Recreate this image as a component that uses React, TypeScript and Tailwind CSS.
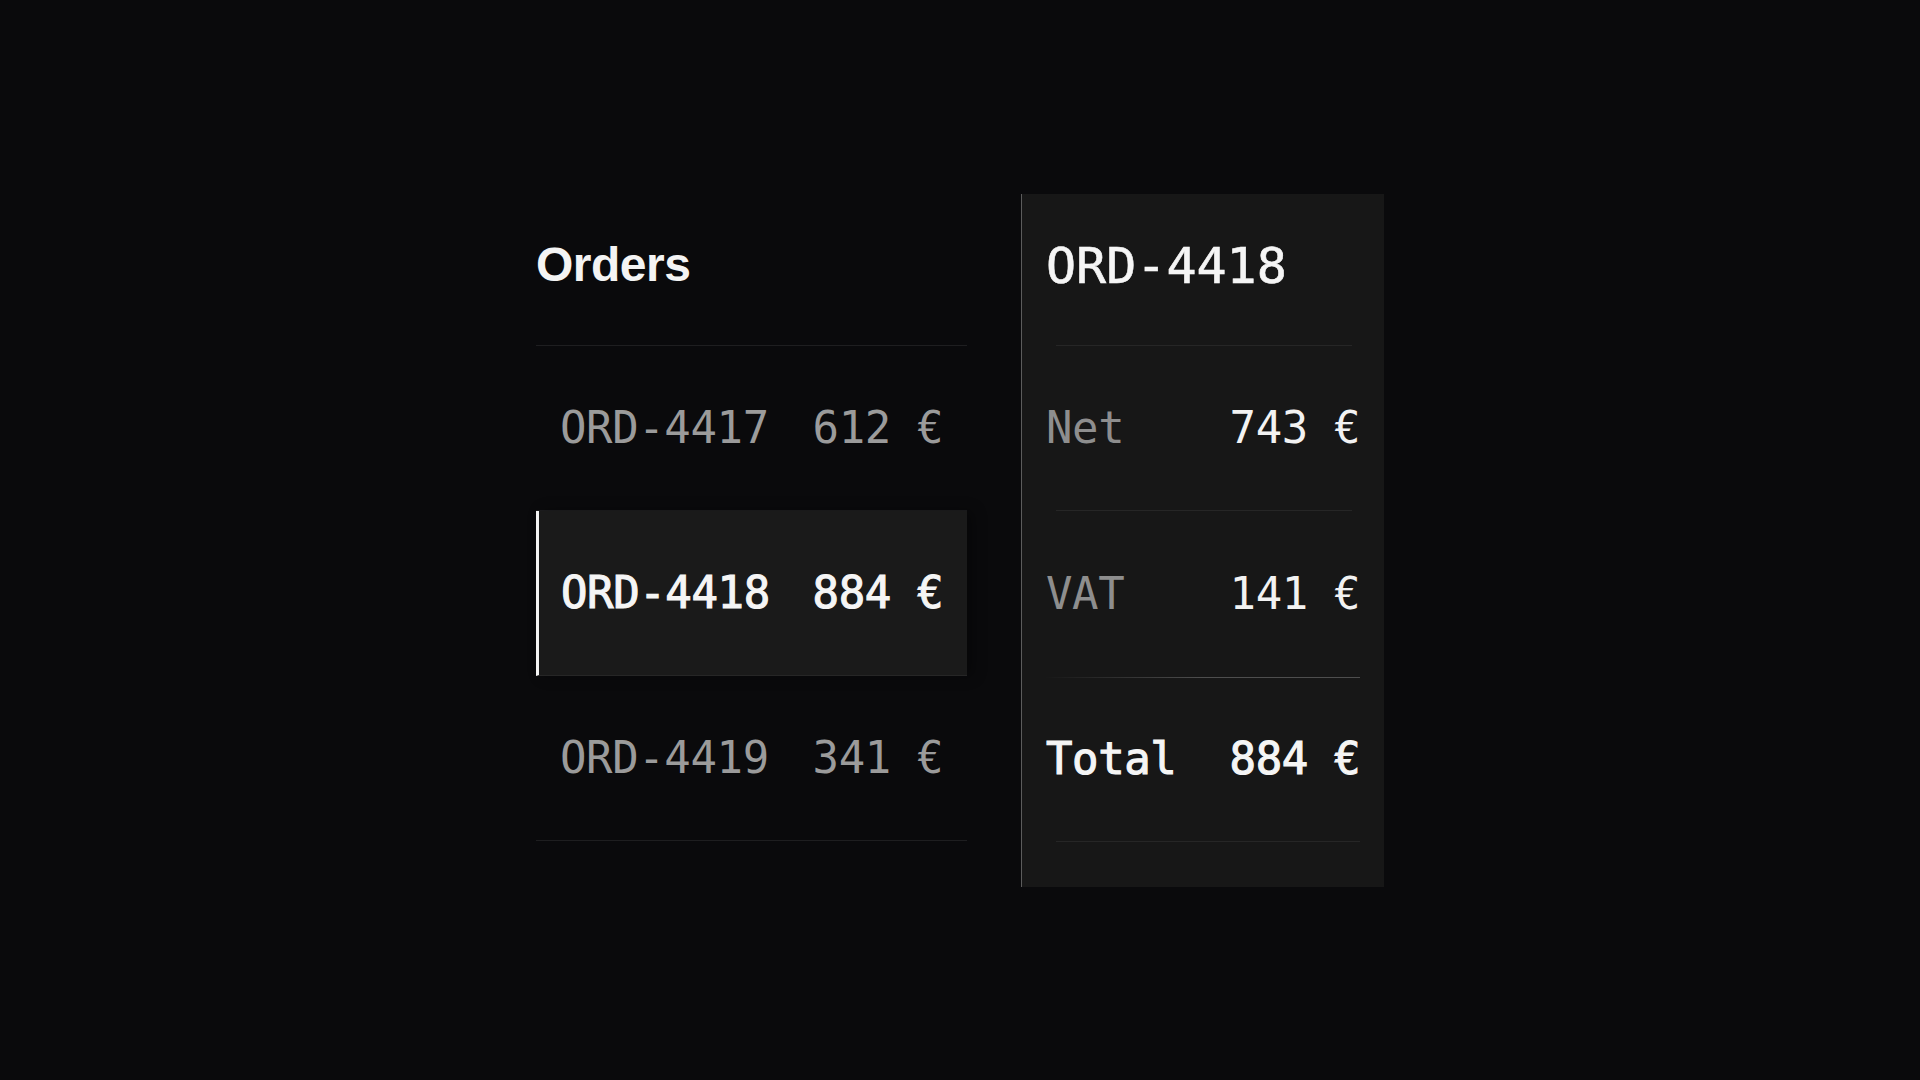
import React from "react";

const mono = { fontFamily: '"DejaVu Sans Mono", "Liberation Mono", monospace' };

const orders = [
  { id: "ORD-4417", amount: "612 €", selected: false },
  { id: "ORD-4418", amount: "884 €", selected: true },
  { id: "ORD-4419", amount: "341 €", selected: false },
];

export default function App() {
  return (
    <div className="min-h-screen w-full bg-[#0a0a0c] flex items-center justify-center">
      <div className="flex items-start gap-[54px]">
        {/* Left list */}
        <div className="w-[431px] flex flex-col">
          <div className="h-[152px] flex items-center border-b border-[#1e1e20]">
            <h1
              className="text-[48px] font-bold tracking-[-0.5px] text-[#f4f4f4] leading-none pb-[8px]"
              style={{ fontFamily: '"Liberation Sans", Arial, sans-serif' }}
            >
              Orders
            </h1>
          </div>
          {orders.map((o) => (
            <div
              key={o.id}
              className={
                o.selected
                  ? "h-[165px] flex items-center justify-between pl-[22px] pr-6 bg-[#1a1a1a] border-l-[3px] border-[#f4f4f4] border-b border-b-[#262626] shadow-[6px_0_12px_rgba(0,0,0,0.35)]"
                  : "h-[165px] flex items-center justify-between px-6 border-b border-[#1e1e20]"
              }
              style={mono}
            >
              <span
                className={
                  o.selected
                    ? "text-[44px] tracking-[-0.4px] text-[#f5f5f5] leading-none [-webkit-text-stroke:1.1px_#f5f5f5]"
                    : "text-[44px] tracking-[-0.4px] text-[#9b9b9b] leading-none"
                }
              >
                {o.id}
              </span>
              <span
                className={
                  o.selected
                    ? "text-[44px] tracking-[-0.4px] text-[#f5f5f5] leading-none [-webkit-text-stroke:1.1px_#f5f5f5]"
                    : "text-[44px] tracking-[-0.4px] text-[#9b9b9b] leading-none"
                }
              >
                {o.amount}
              </span>
            </div>
          ))}
        </div>

        {/* Right detail panel */}
        <div
          className="w-[363px] bg-[#171717] border-l border-[#5c5c5c] px-6 pb-[45px] flex flex-col"
          style={mono}
        >
          <div className="h-[151px] flex items-center">
            <span className="text-[50px] text-[#f5f5f5] leading-none pb-[6px] [-webkit-text-stroke:0.6px_#f5f5f5]">ORD-4418</span>
          </div>
          <div className="h-px ml-[10px] mr-[8px] bg-[#262626]" />
          <div className="h-[164px] flex items-center justify-between">
            <span className="text-[44px] tracking-[-0.4px] text-[#8e8e8e] leading-none">Net</span>
            <span className="text-[44px] tracking-[-0.4px] text-[#f2f2f2] leading-none">743 €</span>
          </div>
          <div className="h-px ml-[10px] mr-[8px] bg-[#262626]" />
          <div className="h-[166px] flex items-center justify-between">
            <span className="text-[44px] tracking-[-0.4px] text-[#8e8e8e] leading-none">VAT</span>
            <span className="text-[44px] tracking-[-0.4px] text-[#f2f2f2] leading-none">141 €</span>
          </div>
          <div className="h-px -ml-[2px] bg-gradient-to-r from-[#171717] via-[#4e4e4e] to-[#4e4e4e]" />
          <div className="h-[163px] flex items-center justify-between">
            <span className="text-[44px] tracking-[-0.4px] text-[#f5f5f5] leading-none [-webkit-text-stroke:1.1px_#f5f5f5]">Total</span>
            <span className="text-[44px] tracking-[-0.4px] text-[#f5f5f5] leading-none [-webkit-text-stroke:1.1px_#f5f5f5]">884 €</span>
          </div>
          <div className="h-px ml-[10px] bg-[#262626]" />
        </div>
      </div>
    </div>
  );
}
